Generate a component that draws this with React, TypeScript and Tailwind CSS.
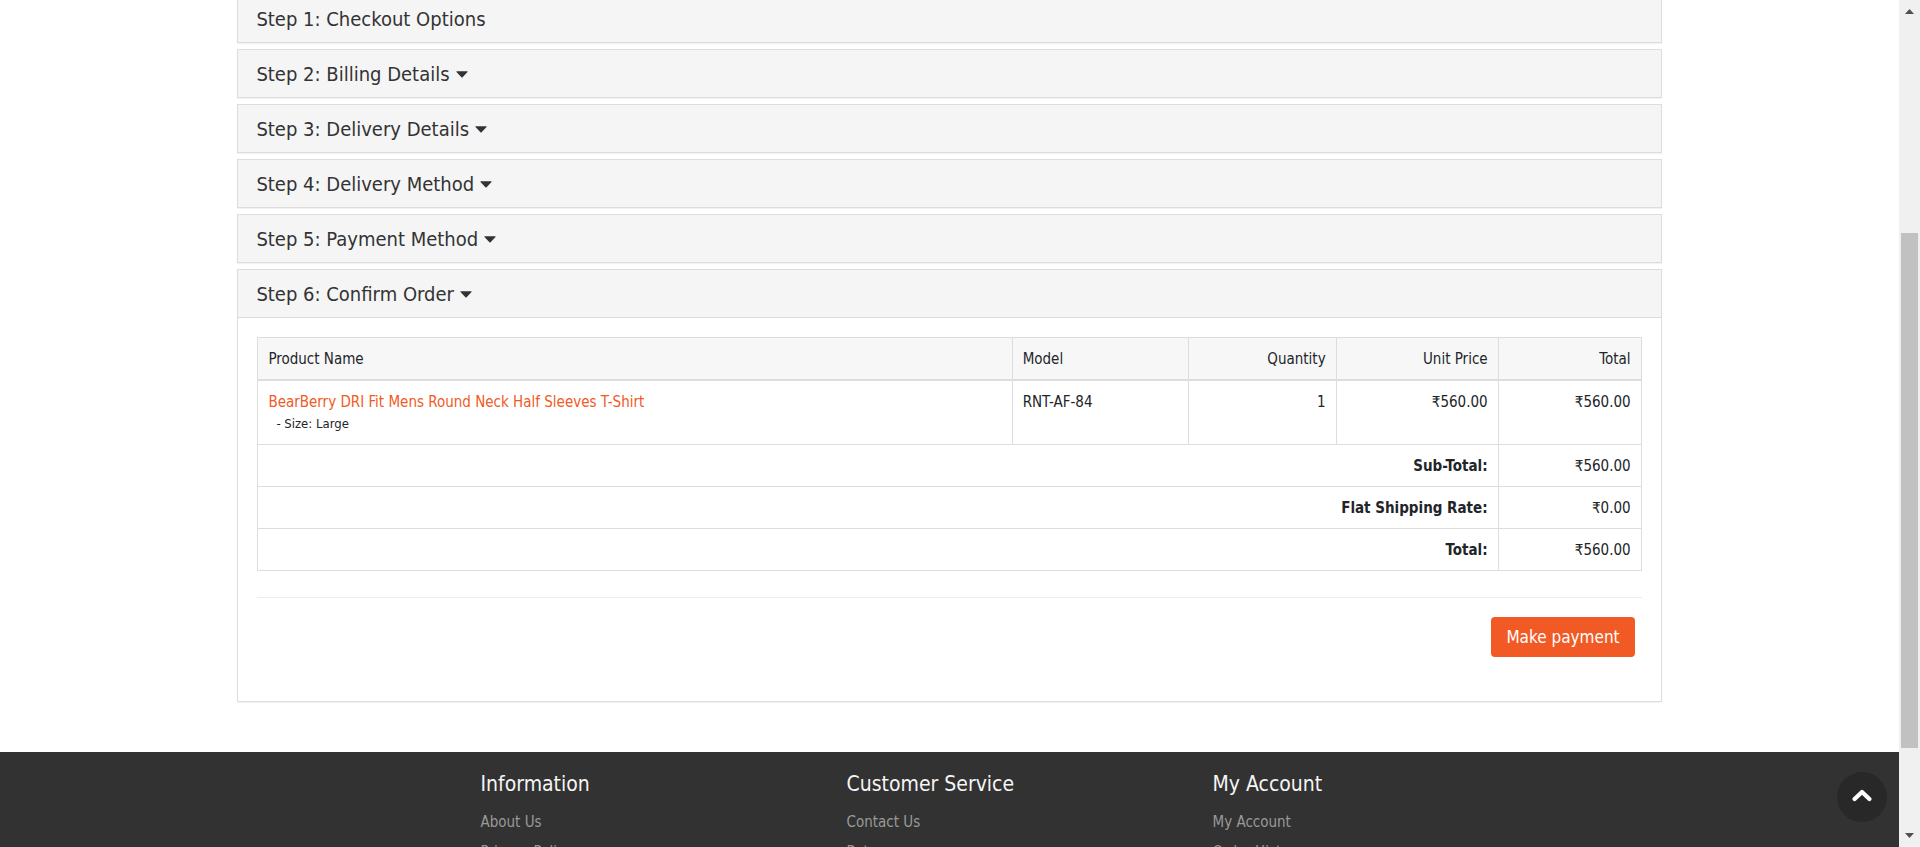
import React from "react";

const steps = [
  "Step 2: Billing Details",
  "Step 3: Delivery Details",
  "Step 4: Delivery Method",
  "Step 5: Payment Method",
];

const totals = [
  { label: "Sub-Total:", value: "₹560.00" },
  { label: "Flat Shipping Rate:", value: "₹0.00" },
  { label: "Total:", value: "₹560.00" },
];

const footerColumns = [
  { title: "Information", links: ["About Us", "Privacy Policy"] },
  { title: "Customer Service", links: ["Contact Us", "Returns"] },
  { title: "My Account", links: ["My Account", "Order History"] },
];

function Caret() {
  return (
    <svg viewBox="0 0 12 7" className="ml-1.5 h-[7px] w-3" aria-hidden="true">
      <path d="M0.7 0.2h10.6q0.7 0.3 0.2 0.9L6.6 6.3q-0.6 0.5-1.2 0L0.5 1.1q-0.5-0.6 0.2-0.9z" fill="currentColor" />
    </svg>
  );
}

function Panel({ title, caret = true, children }: { title: string; caret?: boolean; children?: React.ReactNode }) {
  return (
    <section className="border border-[#dddddd] bg-white shadow-[0_1px_1px_rgba(0,0,0,0.05)]">
      <h4 className="bg-[#f5f5f5] text-xl leading-6 text-[#333333]">
        {caret ? (
          <a href="#" className="flex items-center px-[18px] pt-3 pb-[11px]">
            {title}
            <Caret />
          </a>
        ) : (
          <span className="flex px-[18px] pt-3 pb-[11px]">{title}</span>
        )}
      </h4>
      {children}
    </section>
  );
}

function OrderTable() {
  const cell = "border border-[#dddddd] px-[10px] pt-[10px] pb-[9px] align-top font-normal";
  return (
    <table className="w-full table-fixed border-collapse text-[15px] leading-[22px] text-[#212529]">
      <colgroup>
        <col />
        <col className="w-[176px]" />
        <col className="w-[148px]" />
        <col className="w-[162px]" />
        <col className="w-[143px]" />
      </colgroup>
      <thead className="bg-[#f7f7f7]">
        <tr>
          <th scope="col" className={`${cell} border-b-2 text-left`}>Product Name</th>
          <th scope="col" className={`${cell} border-b-2 text-left`}>Model</th>
          <th scope="col" className={`${cell} border-b-2 text-right`}>Quantity</th>
          <th scope="col" className={`${cell} border-b-2 text-right`}>Unit Price</th>
          <th scope="col" className={`${cell} border-b-2 text-right`}>Total</th>
        </tr>
      </thead>
      <tbody>
        <tr>
          <td className={`${cell} text-left`}>
            <a href="#" className="text-[#f15a24]">BearBerry DRI Fit Mens Round Neck Half Sleeves T-Shirt</a>
            <div className="pl-2 text-[13px] leading-[22px]">- Size: Large</div>
          </td>
          <td className={`${cell} text-left`}>RNT-AF-84</td>
          <td className={`${cell} text-right`}>1</td>
          <td className={`${cell} text-right`}>₹560.00</td>
          <td className={`${cell} text-right`}>₹560.00</td>
        </tr>
      </tbody>
      <tfoot>
        {totals.map((row) => (
          <tr key={row.label}>
            <td colSpan={4} className={`${cell} text-right`}>
              <strong className="font-bold">{row.label}</strong>
            </td>
            <td className={`${cell} text-right`}>{row.value}</td>
          </tr>
        ))}
      </tfoot>
    </table>
  );
}

function Scrollbar() {
  return (
    <div className="flex w-[21px] shrink-0 flex-col items-center bg-[#f0f0f0] py-[9px]" aria-hidden="true">
      <svg viewBox="0 0 9 5" className="h-[5px] w-[9px]">
        <path d="M4.5 0L9 5H0z" fill="#505050" />
      </svg>
      <div className="w-full grow-219" />
      <div className="w-[17px] grow-515 bg-[#c1c1c1]" />
      <div className="w-full grow-85" />
      <svg viewBox="0 0 9 5" className="h-[5px] w-[9px]">
        <path d="M0 0h9L4.5 5z" fill="#505050" />
      </svg>
    </div>
  );
}

export default function App() {
  return (
    <div className="flex h-screen overflow-hidden bg-white font-['DejaVu_Sans_Condensed','Noto_Sans',sans-serif]">
      <div className="flex min-w-0 grow flex-col overflow-hidden">
        <main className="mx-auto -mt-[6px] flex w-3/4 shrink-0 flex-col gap-1.5 pb-[50px]">
          <Panel title="Step 1: Checkout Options" caret={false} />
          {steps.map((s) => (
            <Panel key={s} title={s} />
          ))}
          <Panel title="Step 6: Confirm Order">
            <div className="border-t border-[#dddddd] px-[19px] pt-[19px] pb-11">
              <OrderTable />
              <hr className="mt-[26px] mb-[19px] border-[#eeeeee]" />
              <div className="flex justify-end pr-[7px]">
                <button
                  type="button"
                  className="h-10 rounded-[4px] bg-[#f15a24] px-[15px] text-[17px] leading-6 text-white"
                >
                  Make payment
                </button>
              </div>
            </div>
          </Panel>
        </main>
        <footer className="shrink-0 bg-[#323232]">
          <div className="mx-auto grid w-full max-w-[1098px] grid-cols-3 pt-5 pb-10">
            {footerColumns.map((col) => (
              <div key={col.title} className="pl-20">
                <h5 className="text-[21px] leading-6 text-[#f5f5f5]">{col.title}</h5>
                <ul className="mt-[11px] text-[15px] leading-[30px] text-[#999999]">
                  {col.links.map((l) => (
                    <li key={l}>
                      <a href="#">{l}</a>
                    </li>
                  ))}
                </ul>
              </div>
            ))}
          </div>
        </footer>
      </div>
      <Scrollbar />
      <button
        type="button"
        aria-label="Back to top"
        className="absolute right-[33px] bottom-[25px] flex size-[50px] items-center justify-center rounded-full bg-[#282828] pb-1"
      >
        <svg viewBox="0 0 20 13" className="h-[13px] w-5" aria-hidden="true">
          <path d="M2.6 10L10 3L17.4 10" fill="none" stroke="#ffffff" strokeWidth="4.2" strokeLinecap="round" strokeLinejoin="round" />
        </svg>
      </button>
    </div>
  );
}
